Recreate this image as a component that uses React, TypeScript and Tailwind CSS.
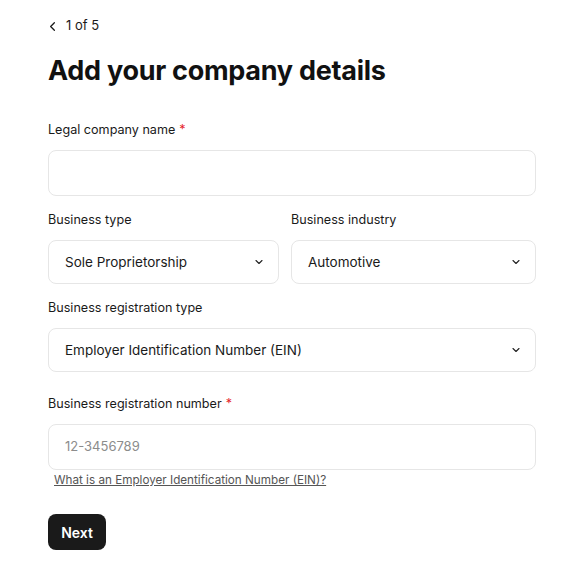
import { ChevronDown, ChevronLeft } from "lucide-react";

const Label = ({ text, required }: { text: string; required?: boolean }) => (
  <div className="h-5 pt-px text-[12.6px] leading-5 text-[#1a1a1a]">
    {text}
    {required && <span className="ml-1 text-[#e5242b]">*</span>}
  </div>
);

const Select = ({ value }: { value: string }) => (
  <div className="flex h-[44px] items-center justify-between rounded-lg border border-[#e6e6e6] bg-white pl-4 pr-[13px] text-[13.5px] text-[#1a1a1a]">
    <span>{value}</span>
    <ChevronDown size={12} strokeWidth={2.2} className="text-[#222]" />
  </div>
);

export default function App() {
  return (
    <div className="min-h-[575px] w-[578px] bg-white pl-12 pt-4 font-['Inter',sans-serif] text-[#111]">
      <div className="w-[488px]">
        {/* step */}
        <div className="flex h-5 items-center gap-[6px] text-[13px] text-[#1a1a1a]">
          <ChevronLeft size={15} strokeWidth={2} className="-ml-[3px]" />
          <span>1 of 5</span>
        </div>

        <h1 className="mt-[19px] h-8 text-[27px] font-bold leading-8 tracking-[-0.01em] text-[#111]">
          Add your company details
        </h1>

        <div className="mt-8">
          <Label text="Legal company name" required />
          <div className="mt-[11px] h-[46px] rounded-lg border border-[#e6e6e6] bg-white" />
        </div>

        <div className="mt-[13px] grid grid-cols-[231px_1fr] gap-3">
          <div>
            <Label text="Business type" />
            <div className="mt-[11px]">
              <Select value="Sole Proprietorship" />
            </div>
          </div>
          <div>
            <Label text="Business industry" />
            <div className="mt-[11px]">
              <Select value="Automotive" />
            </div>
          </div>
        </div>

        <div className="mt-[13px]">
          <Label text="Business registration type" />
          <div className="mt-[11px]">
            <Select value="Employer Identification Number (EIN)" />
          </div>
        </div>

        <div className="mt-[21px]">
          <Label text="Business registration number" required />
          <div className="mt-[11px] flex h-[46px] items-center rounded-lg border border-[#e6e6e6] bg-white px-4 text-[13px] text-[#8c8c8c]">
            12-3456789
          </div>
          <a href="#" className="ml-[6px] mt-[2px] block h-4 text-[11.7px] leading-4 text-[#555] underline">
            What is an Employer Identification Number (EIN)?
          </a>
        </div>

        <button className="mt-[26px] h-9 w-[58px] rounded-lg bg-[#1a1a1a] text-[14px] font-semibold text-white">
          Next
        </button>
      </div>
    </div>
  );
}
